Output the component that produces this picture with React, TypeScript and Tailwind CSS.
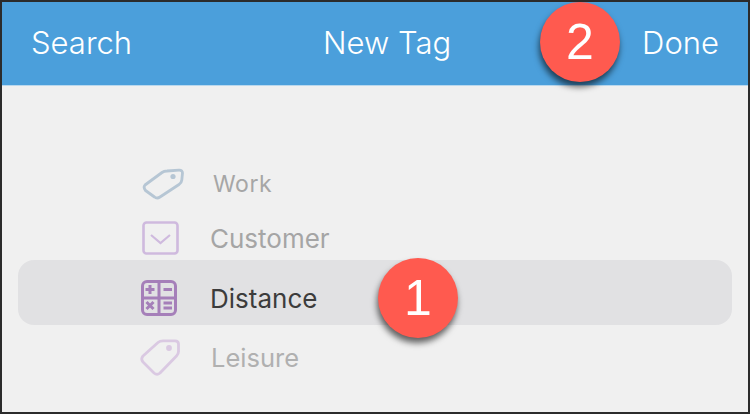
import React from "react";

const WorkTag: React.FC = () => (
  <svg className="w-[42px] h-[32px] ml-[1px]" viewBox="0 0 42 32" fill="none" stroke="#b6c6d4" strokeWidth="2.8" strokeLinejoin="round">
    <path d="M3 17 L20 4.5 Q22 3 25 3 L37 2.2 Q40.5 2 40.5 5 L39.8 12 Q39.5 15 37 16.5 L18 29 Q15 31 12.5 29 L3.5 22.5 Q1 19.5 3 17 Z" />
    <circle cx="31" cy="8.5" r="2.6" fill="#b6c6d4" stroke="none" />
  </svg>
);

const LeisureTag: React.FC = () => (
  <svg className="w-[42px] h-[40px] -ml-[1px]" viewBox="0 0 42 40" fill="none" stroke="#dac9e2" strokeWidth="2.8" strokeLinejoin="round">
    <path d="M3 18 L18 4.5 Q20 2.8 23 2.8 L35 2.8 Q38.5 2.8 38.5 6 L38.5 13.5 Q38.5 16 36.5 18 L20 35 Q17 37.5 14 35 L3 24 Q0.5 21 3 18 Z" />
    <circle cx="29" cy="10" r="2.9" fill="#dac9e2" stroke="none" />
  </svg>
);

const BoxIcon: React.FC = () => (
  <svg className="w-[37px] h-[34px] ml-[1px]" viewBox="0 0 37 34" fill="none" stroke="#cfbade" strokeWidth="2.6">
    <rect x="1.5" y="1.5" width="34" height="31" rx="3" />
    <path d="M9 14 L18.5 22 L28 14" strokeWidth="2.2" />
  </svg>
);

const CalcIcon: React.FC = () => (
  <svg className="w-[36px] h-[36px]" viewBox="0 0 36 36" fill="none" stroke="#a57fb9" strokeWidth="3">
    <rect x="1.5" y="1.5" width="33" height="33" rx="4.5" />
    <path d="M18 1.5 V34.5 M1.5 18 H34.5" />
    <path d="M4.5 9.5 H13.5 M9 5 V14 M22.5 9.5 H31 M22.5 23 H31 M22.5 28 H31 M5.5 22 L12.5 29 M12.5 22 L5.5 29" strokeWidth="3" />
  </svg>
);

const Badge: React.FC<{ label: string; className: string }> = ({ label, className }) => (
  <div
    className={`absolute w-20 h-20 rounded-full bg-[#ff5a4f] text-white flex items-center justify-center text-[50px] shadow-[-1px_5px_6px_rgba(0,0,0,0.6)] font-['Liberation_Sans',sans-serif] ${className}`}
  >
    {label}
  </div>
);

const Row: React.FC<{
  icon: React.ReactNode;
  label: string;
  className: string;
  textClass: string;
}> = ({ icon, label, className, textClass }) => (
  <div className={`flex items-center ${className}`}>
    <div className="w-[44px] flex mr-[25px]">{icon}</div>
    <span className={textClass}>{label}</span>
  </div>
);

export default function App() {
  return (
    <div className="relative w-[750px] h-[414px] overflow-hidden border-2 border-[#2b2b2b] bg-[#f0f0f0] font-['Inter',sans-serif]">
      <header className="h-[84px] bg-[#4b9fdb] border-b border-[#b9d8ee] text-white text-[31px] font-light flex items-center justify-between px-[29px]">
        <span>Search</span>
        <span>New Tag</span>
        <span>Done</span>
      </header>

      <div className="pt-[68px] flex flex-col">
        <Row
          className="h-[60px] pl-[139px]"
          icon={<WorkTag />}
          label="Work"
          textClass="ml-[3px] text-[23px] tracking-[0.6px] text-[#a6a6a6]"
        />
        <Row
          className="h-[46px] pl-[139px] pt-[2px]"
          icon={<BoxIcon />}
          label="Customer"
          textClass="text-[26px] text-[#a5a5a5]"
        />
        <Row
          className="h-[65px] mx-[16px] pl-[123px] pt-[11px] rounded-[16px] bg-[#e1e1e3]"
          icon={<CalcIcon />}
          label="Distance"
          textClass="text-[26px] text-[#3c3c3c]"
        />
        <Row
          className="h-[66px] pl-[139px]"
          icon={<LeisureTag />}
          label="Leisure"
          textClass="ml-[1px] text-[25.5px] text-[#b0b0b0]"
        />
      </div>

      <Badge label="2" className="left-[538px] top-[0px]" />
      <Badge label="1" className="left-[376px] top-[256px]" />
    </div>
  );
}
